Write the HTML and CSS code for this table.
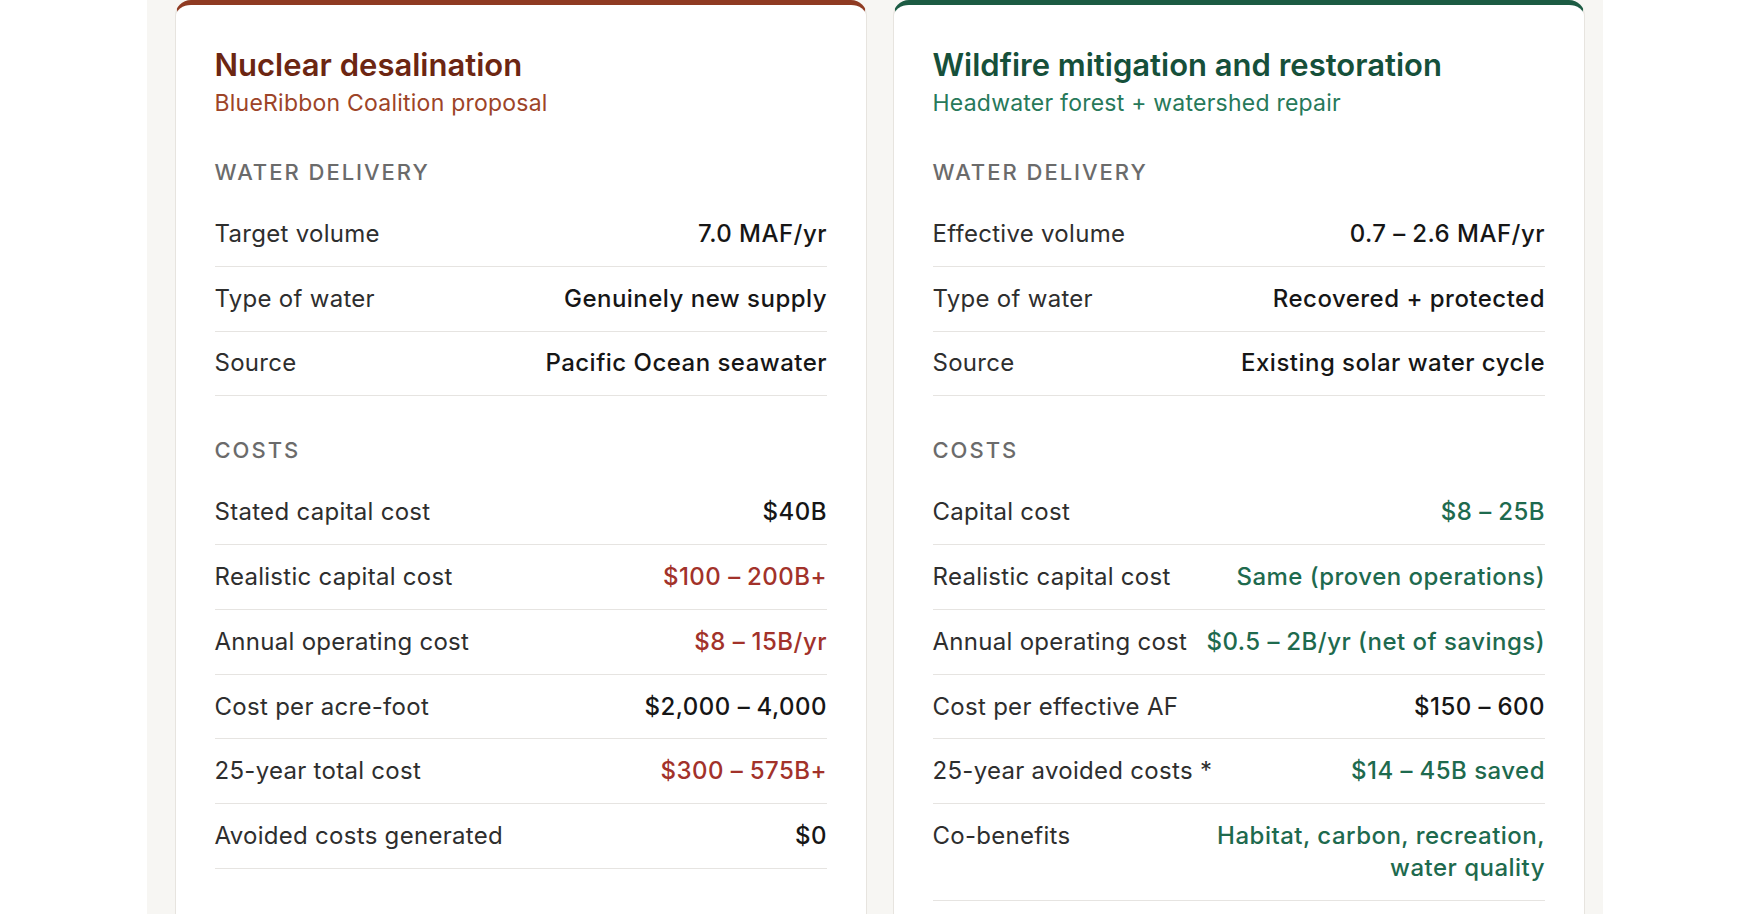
FILE: index.html
```html
<!DOCTYPE html>
<html lang="en">
<head>
<meta charset="utf-8">
<title>Nuclear desalination vs wildfire restoration</title>
<link rel="stylesheet" href="styles.css">
</head>
<body>
<div class="stage">
  <section class="card card-nuclear">
    <header class="card-head">
      <h2 class="card-title">Nuclear desalination</h2>
      <p class="card-sub">BlueRibbon Coalition proposal</p>
    </header>

    <h3 class="sec-label">Water delivery</h3>
    <div class="row"><span class="lbl">Target volume</span><span class="val">7.0 MAF/yr</span></div>
    <div class="row"><span class="lbl">Type of water</span><span class="val">Genuinely new supply</span></div>
    <div class="row"><span class="lbl">Source</span><span class="val">Pacific Ocean seawater</span></div>

    <h3 class="sec-label">Costs</h3>
    <div class="row"><span class="lbl">Stated capital cost</span><span class="val">$40B</span></div>
    <div class="row"><span class="lbl">Realistic capital cost</span><span class="val bad">$100 <span class="dash">–</span> 200B+</span></div>
    <div class="row"><span class="lbl">Annual operating cost</span><span class="val bad">$8 <span class="dash">–</span> 15B/yr</span></div>
    <div class="row"><span class="lbl">Cost per acre-foot</span><span class="val">$2,000 <span class="dash">–</span> 4,000</span></div>
    <div class="row"><span class="lbl">25-year total cost</span><span class="val bad">$300 <span class="dash">–</span> 575B+</span></div>
    <div class="row"><span class="lbl">Avoided costs generated</span><span class="val">$0</span></div>

    <h3 class="sec-label">Timeline</h3>
    <div class="row"><span class="lbl">Time to first water</span><span class="val">15 <span class="dash">–</span> 25 years</span></div>
  </section>

  <section class="card card-wildfire">
    <header class="card-head">
      <h2 class="card-title">Wildfire mitigation and restoration</h2>
      <p class="card-sub">Headwater forest + watershed repair</p>
    </header>

    <h3 class="sec-label">Water delivery</h3>
    <div class="row"><span class="lbl">Effective volume</span><span class="val">0.7 <span class="dash">–</span> 2.6 MAF/yr</span></div>
    <div class="row"><span class="lbl">Type of water</span><span class="val">Recovered + protected</span></div>
    <div class="row"><span class="lbl">Source</span><span class="val">Existing solar water cycle</span></div>

    <h3 class="sec-label">Costs</h3>
    <div class="row"><span class="lbl">Capital cost</span><span class="val good">$8 <span class="dash">–</span> 25B</span></div>
    <div class="row"><span class="lbl">Realistic capital cost</span><span class="val good">Same (proven operations)</span></div>
    <div class="row"><span class="lbl">Annual operating cost</span><span class="val good">$0.5 <span class="dash">–</span> 2B/yr (net of savings)</span></div>
    <div class="row"><span class="lbl">Cost per effective AF</span><span class="val">$150 <span class="dash">–</span> 600</span></div>
    <div class="row"><span class="lbl">25-year avoided costs *</span><span class="val good">$14 <span class="dash">–</span> 45B saved</span></div>
    <div class="row"><span class="lbl">Co-benefits</span><span class="val good">Habitat, carbon, recreation, water quality</span></div>

    <h3 class="sec-label">Timeline</h3>
    <div class="row"><span class="lbl">Time to first water</span><span class="val">1 <span class="dash">–</span> 3 years</span></div>
  </section>
</div>
</body>
</html>
```

FILE: styles.css
```css
* { box-sizing: border-box; }

html, body {
  margin: 0;
  padding: 0;
  background: #ffffff;
  height: 914px;
  overflow: hidden;
}

body {
  font-family: Inter, "Liberation Sans", sans-serif;
  color: #1d1d1d;
}

.stage {
  margin-left: 147px;
  width: 1456px;
  min-height: 914px;
  background: #f7f6f3;
  padding: 0 18px 0 28px;
  display: flex;
  gap: 26px;
  align-items: flex-start;
}

.card {
  width: 692px;
  flex: none;
  background: #ffffff;
  border: 1.5px solid #e7e4df;
  border-top-width: 5px;
  border-radius: 16px 16px 0 0;
  padding: 40px 39px 40px 38.5px;
}

.card-nuclear { border-top-color: #8f3b22; }
.card-wildfire { border-top-color: #1c5b43; }

.card-head { margin-bottom: 40px; }

.card-title {
  margin: 0;
  font-size: 31px;
  line-height: 40px;
  font-weight: 600;
  letter-spacing: 0;
}

.card-sub {
  margin: 3px 0 0;
  font-size: 23px;
  line-height: 30px;
  font-weight: 400;
  letter-spacing: 0.01em;
}

.card-nuclear .card-title { color: #6c2612; }
.card-nuclear .card-sub { color: #9d4428; }
.card-wildfire .card-title { color: #16503a; }
.card-wildfire .card-sub { color: #27795a; }

.sec-label {
  margin: 0 0 16px;
  font-size: 22px;
  line-height: 28px;
  font-weight: 500;
  letter-spacing: 0.09em;
  text-transform: uppercase;
  color: #6b6b6b;
}

.row + .sec-label { margin-top: 40px; }

.row {
  display: flex;
  justify-content: space-between;
  align-items: flex-start;
  gap: 14px;
  padding: 15.9px 0;
  border-bottom: 1px solid #e6e4e1;
  font-size: 24px;
  line-height: 32px;
}

.lbl {
  color: #2e2e2e;
  font-weight: 400;
  letter-spacing: 0.012em;
  white-space: nowrap;
}

.val {
  color: #161616;
  font-weight: 500;
  letter-spacing: 0.02em;
  text-align: right;
  max-width: 61%;
}

.dash { letter-spacing: 0; }

.val.bad { color: #a2322a; }
.val.good { color: #1e6a4e; }
```
